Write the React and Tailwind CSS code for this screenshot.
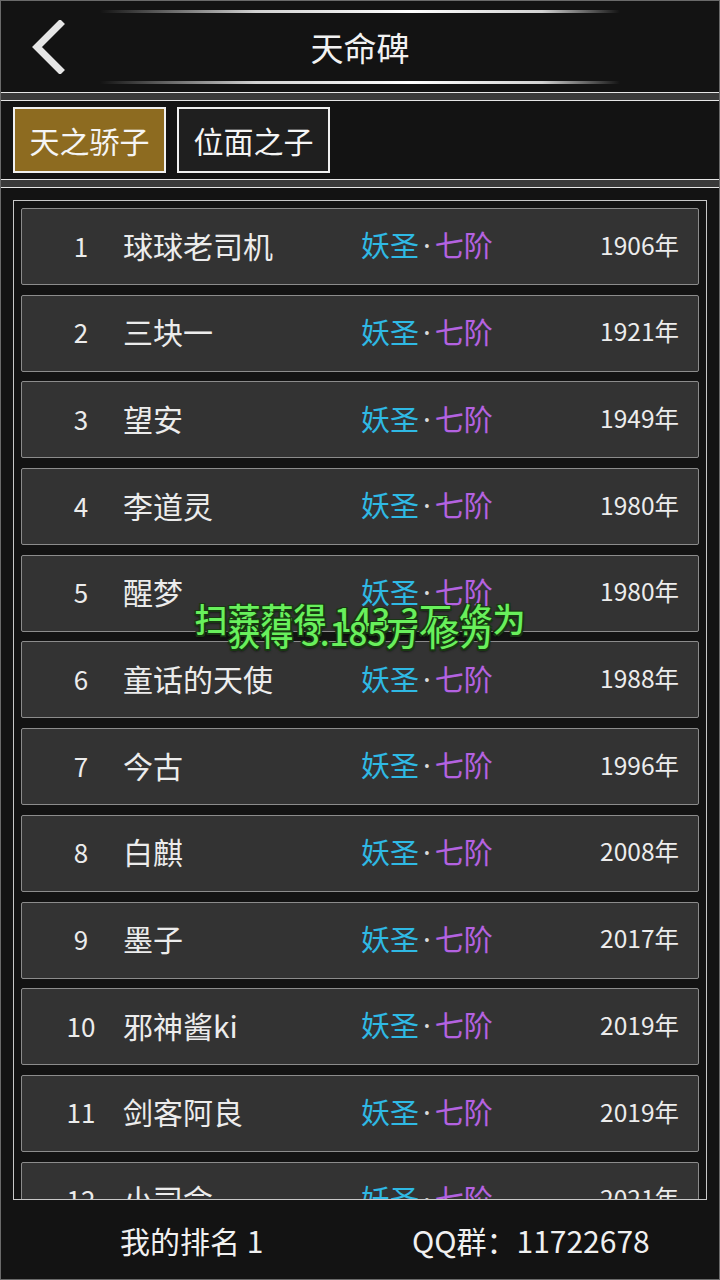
import React from 'react';

const players = [
  { rank: 1, name: '球球老司机', year: 1906 },
  { rank: 2, name: '三块一', year: 1921 },
  { rank: 3, name: '望安', year: 1949 },
  { rank: 4, name: '李道灵', year: 1980 },
  { rank: 5, name: '醒梦', year: 1980 },
  { rank: 6, name: '童话的天使', year: 1988 },
  { rank: 7, name: '今古', year: 1996 },
  { rank: 8, name: '白麒', year: 2008 },
  { rank: 9, name: '墨子', year: 2017 },
  { rank: 10, name: '邪神酱ki', year: 2019 },
  { rank: 11, name: '剑客阿良', year: 2019 },
  { rank: 12, name: '小司命', year: 2021 },
];

const Glow = () => (
  <div className="h-[3px] w-full bg-[linear-gradient(90deg,rgba(255,255,255,0)_0%,rgba(230,230,230,0.9)_30%,#ffffff_60%,rgba(230,230,230,0.9)_85%,rgba(255,255,255,0)_100%)]" />
);

const Separator = () => (
  <div className="h-[9px] border-y border-[#e6e6e6] bg-[#3a3a3a]" />
);

const Row = ({ p }) => (
  <div className="h-[77px] shrink-0 flex items-center pb-[3px] border border-[#8c8c8c] rounded-[2px] bg-[#333333] text-[#ececec]">
    <div className="w-[101px] pl-[17px] text-center text-[26px]">{p.rank}</div>
    <div className="w-[238px] text-[30px]">{p.name}</div>
    <div className="flex-1 flex items-center text-[29px]">
      <span className="text-[#2fb9e4]">妖圣</span>
      <span className="px-[4px] text-[#dcdcdc] font-['Noto_Sans',sans-serif]">·</span>
      <span className="text-[#b462e0]">七阶</span>
    </div>
    <div className="pr-[19px] text-[24.5px]">{p.year}年</div>
  </div>
);

const toastText = 'text-[33px] font-medium text-[#68f05c] whitespace-pre [text-shadow:-1.5px_-1.5px_0_#183812,1.5px_-1.5px_0_#183812,-1.5px_1.5px_0_#183812,1.5px_1.5px_0_#183812,0_2px_3px_#000]';

export default function App() {
  return (
    <div className="relative w-[720px] h-[1280px] overflow-hidden bg-[#131313] border border-[#6a6a6a] flex flex-col font-['Noto_Sans_CJK_SC','Noto_Sans',sans-serif]">
      {/* header */}
      <div className="h-[91px] flex shrink-0">
        <div className="w-[99px] flex items-center pl-[28px]">
          <svg width="38" height="54" viewBox="0 0 38 54">
            <path d="M31 4 L8 27 L31 50" fill="none" stroke="#e6e6e6" strokeWidth="7" strokeLinecap="square" />
          </svg>
        </div>
        <div className="w-[520px] flex flex-col justify-between pt-[9px] pb-[8px]">
          <Glow />
          <div className="text-center text-[33px] text-[#f2f2f2] leading-none">天命碑</div>
          <Glow />
        </div>
      </div>

      <Separator />

      {/* tabs */}
      <div className="h-[78px] shrink-0 flex gap-[11px] pl-[12px] pt-[6px]">
        <div className="w-[153px] h-[66px] flex items-center justify-center border-2 border-[#f0f0f0] bg-[#8d6b20] text-[30px] text-[#f5f5f5]">天之骄子</div>
        <div className="w-[153px] h-[66px] flex items-center justify-center border-2 border-[#f0f0f0] bg-[#1f1f1f] text-[30px] text-[#f5f5f5]">位面之子</div>
      </div>

      <Separator />

      {/* list */}
      <div className="flex-1 min-h-0 pt-[12px] px-[12px] pb-[1px]">
        <div className="h-[1000px] w-[694px] border border-[#c8c8c8] overflow-hidden px-[7px] pt-[7px] flex flex-col gap-[9.7px]">
          {players.map((p) => (
            <Row key={p.rank} p={p} />
          ))}
        </div>
      </div>

      {/* footer */}
      <div className="h-[78px] shrink-0 flex items-center text-[30px] text-[#f0f0f0]">
        <div className="w-[411px] pl-[119px]">我的排名 1</div>
        <div>QQ群：11722678</div>
      </div>

      {/* floating toasts */}
      <div className="absolute left-0 right-0 top-[593px] flex justify-center">
        <div className={toastText}>扫荡获得 143.3万 修为</div>
      </div>
      <div className="absolute left-0 right-0 top-[607px] flex justify-center">
        <div className={toastText}>获得 3.185万 修为</div>
      </div>
    </div>
  );
}
